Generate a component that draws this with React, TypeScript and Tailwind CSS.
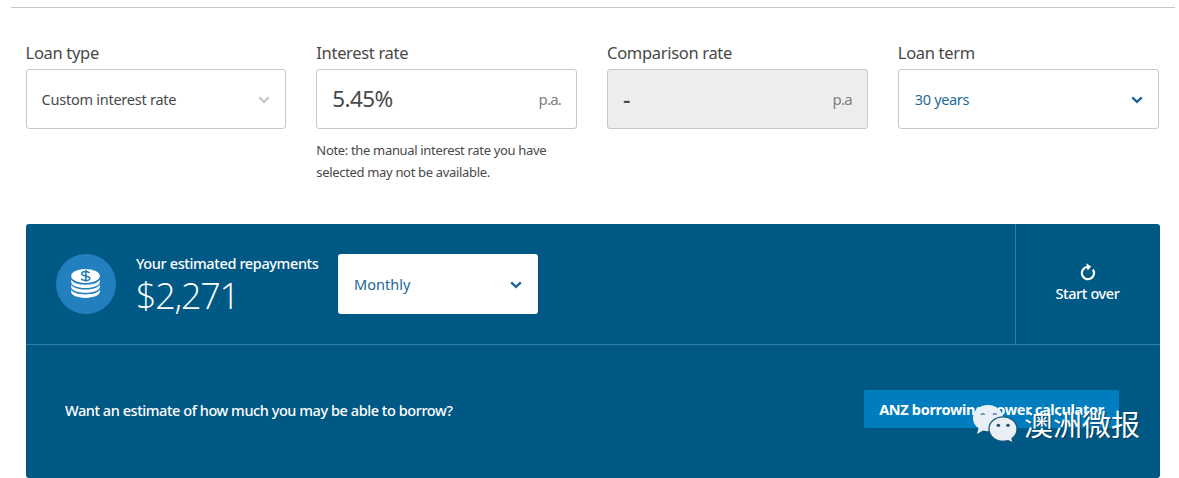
import { ReactNode, useState } from "react";

const Chevron = ({ className }: { className: string }) => (
  <svg className={className} width="12" height="8" viewBox="0 0 12 8" fill="none" stroke="currentColor" strokeWidth="2.4">
    <path d="M1.2 1.3 6 5.9l4.8-4.6" />
  </svg>
)

const CoinsIcon = () => (
  <svg width="60" height="60" viewBox="0 0 60 60">
    <circle cx="30" cy="30" r="30" fill="#2380bf" />
    <g fill="#fff">
      <ellipse cx="29.5" cy="22" rx="14.3" ry="7" />
      <path d="M15.2 25.6c1.6 3.6 7.3 5.2 14.3 5.2s12.7-1.6 14.3-5.2v2.4c0 3.5-6.400 6-14.300 6s-14.300-2.500-14.300-6z" />
      <path d="M15.2 30.600c1.600 3.500 7.300 5 14.300 5s12.700-1.500 14.300-5v2.400c0 3.300-6.400 5.800-14.300 5.800s-14.300-2.500-14.300-5.800z" />
      <path d="M15.2 35.600c1.600 3.400 7.300 4.900 14.300 4.900s12.700-1.500 14.300-4.900v2.500c0 3.300-6.400 5.800-14.300 5.800s-14.300-2.500-14.300-5.800z" />
    </g>
    <path d="M33.600 19c-.9-1-2.400-1.500-4-1.500-2.200 0-3.800.8-3.800 2.200 0 3.200 8 1.300 8 4.500 0 1.400-1.800 2.300-4.100 2.300-1.900 0-3.600-.7-4.600-1.800M29.900 15.800v12" fill="none" stroke="#1f78b5" strokeWidth="1.500" />
  </svg>
)

const RestartIcon = () => (
  <svg width="16" height="18" viewBox="0 0 16 18" fill="none">
    <path d="M12.900 6.500A6.100 6.100 0 1 1 7 4" stroke="#fff" strokeWidth="2.200" />
    <path d="M6.200.300 11.200 3.500 7.600 7.500z" fill="#fff" />
  </svg>
)

const WechatIcon = () => (
  <svg width="46" height="40" viewBox="0 0 46 40">
    <path d="M16 1C7.500 1 1 6.800 1 14.200c0 4.200 2.100 7.700 5.500 10.100L5 30l6-3.400c1.600.500 3.300.700 5 .700 8.400 0 15-5.800 15-13.100S24.400 1 16 1z" fill="#e9f0f5" />
    <g fill="none" stroke="#46799b" strokeWidth="1.300">
      <path d="M9 10.800q2-2.400 3.600 0M21 10.800q2-2.400 3.600 0" />
    </g>
    <path d="M31 12.800c-7.800 0-14 5.400-14 12.200s6.200 12.200 14 12.200c1.700 0 3.300-.2 4.700-.7l5.600 2.700-1.400-4.700c3.200-2.200 5.100-5.500 5.100-9.500 0-6.800-6.200-12.200-14-12.200z" fill="#e9f0f5" stroke="#1b557b" strokeWidth="1.300" />
    <ellipse cx="26.400" cy="21.300" rx="1.800" ry="1.600" fill="#195378" />
    <ellipse cx="36" cy="21.300" rx="1.800" ry="1.600" fill="#195378" />
  </svg>
)

const Field = ({ label, disabled, children, note }: { label: string, disabled?: boolean, children: ReactNode, note?: ReactNode }) => (
  <div>
    <div className="h-[26px] text-[16.5px] leading-5 tracking-[-0.32px] whitespace-nowrap">{label}</div>
    <div className={`flex h-[60px] items-center justify-between rounded-[3px] border border-[#c8c8c8] px-[15px] ${disabled ? "bg-[#ededed]" : "bg-white"}`}>
      {children}
    </div>
    {note}
  </div>
)

const App = () => {
  const [rate] = useState("5.45%")
  const [repayment] = useState("$2,271")

  return (
    <div className="h-[478px] w-[1179px] overflow-hidden bg-white font-['Noto_Sans','Open_Sans',sans-serif] text-[#494949]">
      <div className="mr-1 ml-[11px] h-2 border-b border-[#c8c8c8]" />
      <div className="mt-[35px] mr-[20.4px] ml-[25.6px] grid h-[181px] grid-cols-4 content-start gap-x-[30px]">
        <Field label="Loan type">
          <span className="pt-0.5 text-[14.5px] tracking-[-0.25px]">Custom interest rate</span>
          <Chevron className="mt-0.5 text-[#c8c8c8]" />
        </Field>
        <Field
          label="Interest rate"
          note={
            <p className="mt-[10px] text-[13px] leading-[22px] tracking-[-0.33px] whitespace-nowrap">
              Note: the manual interest rate you have<br />selected may not be available.
            </p>
          }
        >
          <span className="text-[22.5px] tracking-[-0.6px]">{rate}</span>
          <span className="text-[15px] tracking-[-0.8px] text-[#808080]">p.a.</span>
        </Field>
        <Field label="Comparison rate" disabled>
          <span className="text-[23px] font-medium">-</span>
          <span className="text-[15px] tracking-[-0.8px] text-[#808080]">p.a</span>
        </Field>
        <Field label="Loan term">
          <span className="pt-0.5 pl-px text-[14.5px] tracking-[-0.35px] text-[#1b6899]">30 years</span>
          <Chevron className="mt-0.5 text-[#1b6899]" />
        </Field>
      </div>

      <div className="mr-[19px] ml-[26px] h-[254px] rounded-[3px] bg-[#005885] text-white">
        <div className="flex h-[121px] border-b border-[#2f7da9]">
          <div className="flex flex-1 pt-[30px] pl-[30px]">
            <CoinsIcon />
            <div className="ml-5 w-[202px] whitespace-nowrap">
              <div className="-mt-px text-[14.5px] leading-5 font-medium tracking-[-0.38px]">Your estimated repayments</div>
              <div className="mt-0.5 font-['Open_Sans',sans-serif] text-[36px] leading-[42px] font-light tracking-[-1.3px]">{repayment}</div>
            </div>
            <div className="flex h-[60px] w-[200px] items-center justify-between rounded-[3px] bg-white px-4 text-[#1b6899]">
              <span className="pt-0.5 text-[14.5px] tracking-[0.05px]">Monthly</span>
              <Chevron className="mt-0.5" />
            </div>
          </div>
          <div className="flex w-[145px] flex-col items-center border-l border-[#2f7da9] pt-[39px] pr-px">
            <RestartIcon />
            <span className="mt-px text-[14.5px] leading-[22px] font-medium tracking-[-0.38px]">Start over</span>
          </div>
        </div>
        <div className="flex items-start justify-between pt-[45px] pr-[41px] pl-[39px]">
          <span className="mt-2 text-[14.5px] leading-6 font-medium tracking-[-0.44px]">Want an estimate of how much you may be able to borrow?</span>
          <div className="relative">
            <button className="block h-[38px] w-[255px] rounded-[2px] bg-[#007dbe] pt-0.5 text-[14.5px] font-bold tracking-[-0.32px] whitespace-nowrap">
              ANZ borrowing power calculator
            </button>
            <div className="absolute top-[14px] left-[108px] flex items-start">
              <WechatIcon />
              <span className="-mt-0.5 ml-[6px] font-['Noto_Sans_CJK_SC',sans-serif] text-[29px] leading-[42px] whitespace-nowrap [text-shadow:1px_1px_1px_#003b5d]">澳洲微报</span>
            </div>
          </div>
        </div>
      </div>
    </div>
  )
}

export default App
